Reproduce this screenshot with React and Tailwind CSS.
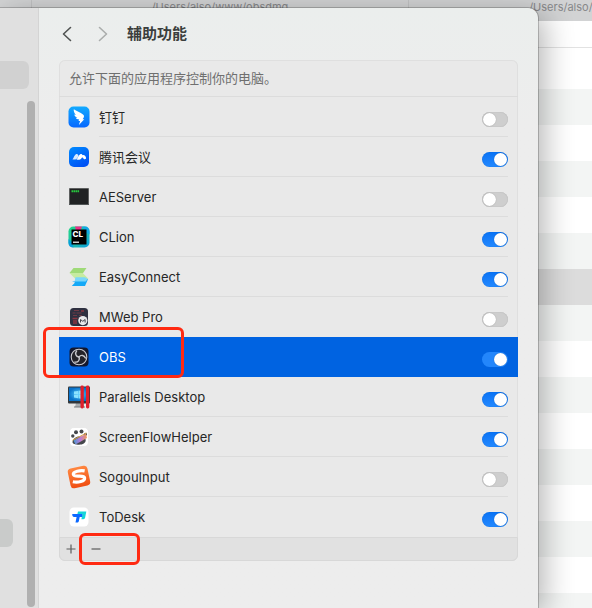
import { useState } from "react";

function DingTalkIcon() {
  return (
    <svg viewBox="0 0 24 24" className="size-6">
      <defs>
        <linearGradient id="ding" x1="0" y1="0" x2="0" y2="1">
          <stop offset="0" stopColor="#12aaff" />
          <stop offset="1" stopColor="#0768ff" />
        </linearGradient>
      </defs>
      <rect x="1.5" y="1.5" width="21" height="21" rx="5" fill="url(#ding)" />
      <path d="M6.800 4.300c2.500 1.800 6.700 3.200 9.200 5.300 1.300 1 1.200 2 .6 3.100l-1 1.600h1.700l-5.400 5.700 1.200-4.100h-1.600l.7-1.400c-1.700 0-3-.7-3.500-1.700l1.700-.1C8.700 12.200 7.600 11 7.200 9.600l1.700.4C7.500 8.500 6.400 6.500 6.800 4.300z" fill="#fff" />
    </svg>
  );
}

function TencentMeetingIcon() {
  return (
    <svg viewBox="0 0 24 24" className="size-6">
      <defs>
        <linearGradient id="meeting" x1="0" y1="0" x2="0.6" y2="1">
          <stop offset="0" stopColor="#008cff" />
          <stop offset="1" stopColor="#0052f5" />
        </linearGradient>
      </defs>
      <rect x="2" y="2" width="20" height="20" rx="5" fill="url(#meeting)" />
      <path d="M5.300 14.300c1.300-.4 1.800-4.300 4-5.300 1.300-.5 2.200.8 2.300 2.200-1 1.200-1.600 3.100-3.200 3.300-1.300.2-2.100-.2-3.100-.2z" fill="#d6eaff" />
      <path d="M9.400 14.400c1.700-1 2.100-4.400 4.200-5.300 1-.4 1.600.3 2 1.200 1.400-.9 3.700 1.300 3.500 3.200-.8 1-1.700 1-2.500.2-.6-.7-.9-1.200-1.500-1.200-.9.900-1.400 2.200-3 2.300-1 .1-1.900-.4-2.700-.4z" fill="#fff" />
    </svg>
  );
}

function AEServerIcon() {
  return (
    <svg viewBox="0 0 24 24" className="size-6">
      <rect x="2" y="3" width="20" height="17" fill="#9a9c9d" />
      <rect x="2.500" y="3.500" width="19" height="15.500" fill="#202223" />
      <path d="M2 19.500h20" stroke="#505556" />
      <path d="M4.500 6.300h8" stroke="#27c83e" strokeWidth="2" strokeDasharray="1.600 .4" />
    </svg>
  );
}

function CLionIcon() {
  return (
    <svg viewBox="0 0 24 24" className="size-6">
      <defs>
        <linearGradient id="clion" x1="0" y1="0" x2="1" y2="1">
          <stop offset="0" stopColor="#21d789" />
          <stop offset="0.5" stopColor="#1fbfa5" />
          <stop offset="1" stopColor="#0b9ee0" />
        </linearGradient>
      </defs>
      <rect x="1.500" y="1.500" width="21" height="21" rx="5" fill="url(#clion)" />
      <path d="M8 1.500h7l-1.500 4H9z" fill="#ee2e87" />
      <path d="M15 1.500h3c3 0 4.500 2 4.500 5v3l-4-2z" fill="#12a9e6" />
      <path d="M1.500 14l4 4 1 4.500c-3 0-5-1.500-5-4.500z" fill="#079fda" />
      <rect x="4.500" y="4.500" width="15" height="15" fill="#000" />
      <text x="5.500" y="12" fontSize="8" fontWeight="800" fill="#fff" fontFamily="Inter, sans-serif">CL</text>
      <path d="M6 17.200h6" stroke="#fff" strokeWidth="1.200" />
    </svg>
  );
}

function EasyConnectIcon() {
  return (
    <svg viewBox="0 0 24 24" className="size-6">
      <path d="M6.500 3h13l-3.800 5.500H5.800L2.500 8z" fill="#9fda78" />
      <path d="M2.500 8h13.200l5.500 5.500-1 .5H8.500z" fill="#c6eba1" />
      <path d="M8.500 12.200h9.500l3.200 2.100L17.500 17H7.500z" fill="#79d6fb" />
      <path d="M5 16.500h13.300l2.900-2.700-3.200 7.200H4.800l3.300-3.500z" fill="#14a9f7" />
    </svg>
  );
}

function MWebIcon() {
  return (
    <svg viewBox="0 0 24 24" className="size-6">
      <rect x="3" y="3" width="18" height="18" rx="3.500" fill="#2e3040" />
      <path d="M7 5.500h5M5.500 8h3M9.500 8h5M6 10.500h4M12 10.500h3" stroke="#6f3a47" strokeWidth="1.200" />
      <path d="M5.500 13.500h5M6 16h4M14 6h3M6 18h4" stroke="#8a3641" strokeWidth="1.300" />
      <circle cx="15.800" cy="15.600" r="4.600" fill="#e8e8ea" />
      <path d="M13.500 17.500v-3l2.300 1.800 2.300-1.800v3" fill="none" stroke="#44444c" strokeWidth="1" />
    </svg>
  );
}

function ObsIcon() {
  return (
    <svg viewBox="0 0 24 24" className="size-6">
      <rect x="2.500" y="2.500" width="19" height="19" rx="4" fill="#13172d" />
      <circle cx="12" cy="12" r="7.800" fill="#242329" stroke="#c9c9ce" strokeWidth="1.100" />
      <g fill="none" stroke="#c9c9ce" strokeWidth="1.400" strokeLinecap="round">
        <path d="M12 12c-3.200-.4-4.300-3.700-2.400-6" />
        <path d="M12 12c-3.200-.4-4.300-3.700-2.400-6" transform="rotate(120 12 12)" />
        <path d="M12 12c-3.200-.4-4.300-3.700-2.400-6" transform="rotate(240 12 12)" />
      </g>
    </svg>
  );
}

function ParallelsIcon() {
  return (
    <svg viewBox="0 0 24 24" className="size-6">
      <defs>
        <radialGradient id="screen">
          <stop offset="0" stopColor="#5cd0ff" />
          <stop offset="1" stopColor="#0871c9" />
        </radialGradient>
      </defs>
      <path d="M9 18h7l1 4H8z" fill="#a9adb0" />
      <path d="M7 22h11" stroke="#777b7e" />
      <rect x="1" y="1.500" width="22" height="17" rx="1" fill="#30363b" />
      <rect x="2" y="2.500" width="20" height="13.500" fill="url(#screen)" />
      <path d="M7 6.500l4-.6v3.400H7zM11.500 5.800l3-.4v3.900h-3zM7 9.800h4v3.400l-4-.6zM11.500 9.800h3v3.900l-3-.4z" fill="#8be2ff" />
      <rect x="13.500" y="0.500" width="3.300" height="23" rx="1.400" fill="#e01f2c" />
      <rect x="19" y="0.500" width="3.300" height="23" rx="1.400" fill="#e01f2c" />
    </svg>
  );
}

function ScreenFlowIcon() {
  return (
    <svg viewBox="0 0 24 24" className="size-6">
      <defs>
        <linearGradient id="flow" x1="0" y1="0" x2="1" y2="0">
          <stop offset="0" stopColor="#469bd0" />
          <stop offset="0.5" stopColor="#b978da" />
          <stop offset="1" stopColor="#f29b52" />
        </linearGradient>
      </defs>
      <rect x="2.500" y="2.500" width="19" height="19" rx="4.500" fill="#fff" stroke="#dedede" strokeWidth=".5" />
      <g fill="#45484c">
        <circle cx="5.800" cy="11" r="1.700" />
        <circle cx="9" cy="7.200" r="2" />
        <circle cx="14.500" cy="6.500" r="2" />
        <circle cx="18.500" cy="9.300" r="1.500" />
        <path d="M5.500 17c0-3 3.500-5.500 6.500-5.500s6.500 1 6.700 3.500c.2 3-3 4.700-6.700 4.700S5.500 19 5.500 17z" />
      </g>
      <path d="M6.500 15.500L19 8.800l1 4.200L8.500 19.400z" fill="url(#flow)" />
      <path d="M5.500 15.300L19.500 8" stroke="#d6a24c" />
    </svg>
  );
}

function SogouIcon() {
  return (
    <svg viewBox="0 0 24 24" className="size-6 overflow-visible">
      <defs>
        <linearGradient id="sogou" x1="0" y1="0" x2="0" y2="1">
          <stop offset="0" stopColor="#ff8740" />
          <stop offset="1" stopColor="#f04e12" />
        </linearGradient>
      </defs>
      <g transform="rotate(-12 12 12)">
        <rect x="2" y="2" width="20" height="20" rx="3.500" fill="url(#sogou)" />
        <path d="M18.800 7.200c-4-1.700-11.800-2-11.800 1.200 0 3.600 10.600 1.800 10.300 5.700-.3 3.400-7.700 3.400-12.300 1.200" fill="none" stroke="#fff" strokeWidth="3.200" />
      </g>
    </svg>
  );
}

function ToDeskIcon() {
  return (
    <svg viewBox="0 0 24 24" className="size-6">
      <rect x="2.500" y="2.500" width="19" height="19" rx="4.500" fill="#fff" />
      <path d="M11 6.500h8.300l-1.200 6.300c-.2.900-.8 1.400-1.700 1.400h-2l1-5.200h-5z" fill="#14d5d8" />
      <path d="M5.300 9h10.200l-.5 3h-2.300l-.9 4.200c-.2.900-.8 1.300-1.700 1.300H8.500L9.600 12H7.200C5.700 12 5 10.500 5.300 9z" fill="#0a68ff" />
    </svg>
  );
}

const APPS = [
  { name: "钉钉", Icon: DingTalkIcon, on: false },
  { name: "腾讯会议", Icon: TencentMeetingIcon, on: true },
  { name: "AEServer", Icon: AEServerIcon, on: false },
  { name: "CLion", Icon: CLionIcon, on: true },
  { name: "EasyConnect", Icon: EasyConnectIcon, on: true },
  { name: "MWeb Pro", Icon: MWebIcon, on: false, last: true },
  { name: "OBS", Icon: ObsIcon, on: true, selected: true },
  { name: "Parallels Desktop", Icon: ParallelsIcon, on: true },
  { name: "ScreenFlowHelper", Icon: ScreenFlowIcon, on: true },
  { name: "SogouInput", Icon: SogouIcon, on: false },
  { name: "ToDesk", Icon: ToDeskIcon, on: true, last: true },
];

function AppRow({ app }) {
  const [on, setOn] = useState(app.on);
  const { Icon, name, selected, last } = app;
  return (
    <li className={`flex h-10 items-center gap-2 pr-2.5 pl-2 ${selected ? "bg-[#0063e1] text-white" : "text-[#262626]"}`}>
      <Icon />
      <label
        className={`flex h-10 flex-1 items-center justify-between pt-px ${selected || last ? "" : "shadow-[inset_0_-1px_0_#dcdcdc]"}`}
      >
        <span>{name}</span>
        <input
          type="checkbox"
          checked={on}
          onChange={(e) => setOn(e.target.checked)}
          className={`mt-[3px] h-[15px] w-[26px] appearance-none rounded-full p-px before:block before:size-[13px] before:rounded-full before:bg-white before:shadow-[0_0_1px_rgba(0,0,0,0.3)] checked:before:ml-[11px] ${selected ? "bg-[#2386fb]" : "bg-[#cecece] shadow-[inset_0_0_1px_rgba(0,0,0,0.25)] checked:bg-linear-to-b checked:from-[#0873f5] checked:to-[#2389ff]"}`}
        />
      </label>
    </li>
  );
}

function FinderBackdrop() {
  const rows = Array.from({ length: 16 }, (_, i) => i);
  return (
    <div aria-hidden="true" className="absolute inset-0 overflow-hidden bg-white">
      <div className="flex h-[21px] bg-[#d2d3d4] text-[11px] leading-[14px] text-[#87888a]">
        <div className="w-8 shrink-0 border-r border-[#c2c3c4]" />
        <div className="w-[377px] shrink-0 border-r border-[#c2c3c4] text-center">/Users/also/www/obsdmg</div>
        <div className="w-[377px] shrink-0 text-center">/Users/also/www/obsdmg</div>
      </div>
      <div className="mb-[5px] h-[27px] border-b border-[#e2e2e2]" />
      {rows.map((i) => (
        <div key={i} className={`h-9 ${i === 6 ? "bg-[#dcdcdc]" : i % 2 ? "bg-[#f3f5f4]" : "bg-white"}`} />
      ))}
    </div>
  );
}

function Sidebar() {
  return (
    <aside className="flex w-[39px] shrink-0 justify-between border-r border-[#d4d4d4] bg-[#e0e0e0]">
      <div className="flex w-[30px] flex-col justify-between pt-[53px] pb-[61px]">
        <div className="h-7 w-[29px] rounded-r-md bg-[#d1d1d1]" />
        <div className="h-7 w-[13px] rounded-r-md bg-[#c9cbca]" />
      </div>
      <div className="-ml-[3px] mt-[93px] mb-px mr-[3px] w-2 shrink-0 rounded-full bg-[#b0b0b0]" />
    </aside>
  );
}

export default function App() {
  return (
    <div className="relative flex min-h-screen overflow-hidden pt-2 pr-[54px] font-[Inter,'Noto_Sans_CJK_SC',sans-serif] text-[13px]">
      <FinderBackdrop />
      <div className="relative flex min-w-0 flex-1 rounded-tr-[10px] bg-linear-to-b from-[#ebeeed] to-[#ededed] to-20% shadow-[0_0_0_1px_rgba(0,0,0,0.2),6px_6px_30px_rgba(0,0,0,0.3)]">
        <Sidebar />
        <main className="min-w-0 flex-1 px-5 pb-[47px]">
          <header className="flex h-[52px] items-center gap-4">
            <nav className="flex gap-5">
              <button aria-label="后退" className="flex w-4 justify-center">
                <svg viewBox="0 0 10 16" className="h-4 w-2.5" fill="none" stroke="#505352" strokeWidth="1.600" strokeLinecap="round" strokeLinejoin="round">
                  <path d="M8.500 1.500L1.500 8l7 6.500" />
                </svg>
              </button>
              <button aria-label="前进" disabled className="flex w-4 justify-center">
                <svg viewBox="0 0 10 16" className="h-4 w-2.5" fill="none" stroke="#aaadac" strokeWidth="1.600" strokeLinecap="round" strokeLinejoin="round">
                  <path d="M1.500 1.500l7 6.500-7 6.500" />
                </svg>
              </button>
            </nav>
            <h1 className="text-[15px] font-bold text-[#3b3e3d]">辅助功能</h1>
          </header>
          <section className="rounded-md bg-[#e9e9e9] shadow-[inset_0_0_0_1px_#dfdfdf]">
            <p className="flex h-[37px] items-center border-b border-[#dcdcdc] px-2.5 pt-px text-[#6f6f6f]">允许下面的应用程序控制你的电脑。</p>
            <ul>
              {APPS.map((app) => (
                <AppRow key={app.name} app={app} />
              ))}
            </ul>
            <div className="flex h-6 items-center gap-[9px] rounded-b-md border border-[#d8d8d8] bg-[#e1e1e1] px-[3px] text-[#5c5c5c]">
              <button aria-label="添加" className="flex size-4 items-center justify-center">
                <svg viewBox="0 0 10 10" className="size-2.5" stroke="currentColor" strokeWidth="1.200">
                  <path d="M5 .5v9M.5 5h9" />
                </svg>
              </button>
              <button aria-label="移除" className="flex size-4 items-center justify-center">
                <svg viewBox="0 0 10 10" className="size-2.5" stroke="currentColor" strokeWidth="1.200">
                  <path d="M.5 5h9" />
                </svg>
              </button>
            </div>
          </section>
        </main>
      </div>
      <div className="pointer-events-none absolute top-[327px] left-[43px] h-[51px] w-[141px] rounded-md border-3 border-[#ff2a12]" />
      <div className="pointer-events-none absolute top-[533px] left-[79px] h-8 w-[61px] rounded-md border-3 border-[#ff2a12]" />
    </div>
  );
}
